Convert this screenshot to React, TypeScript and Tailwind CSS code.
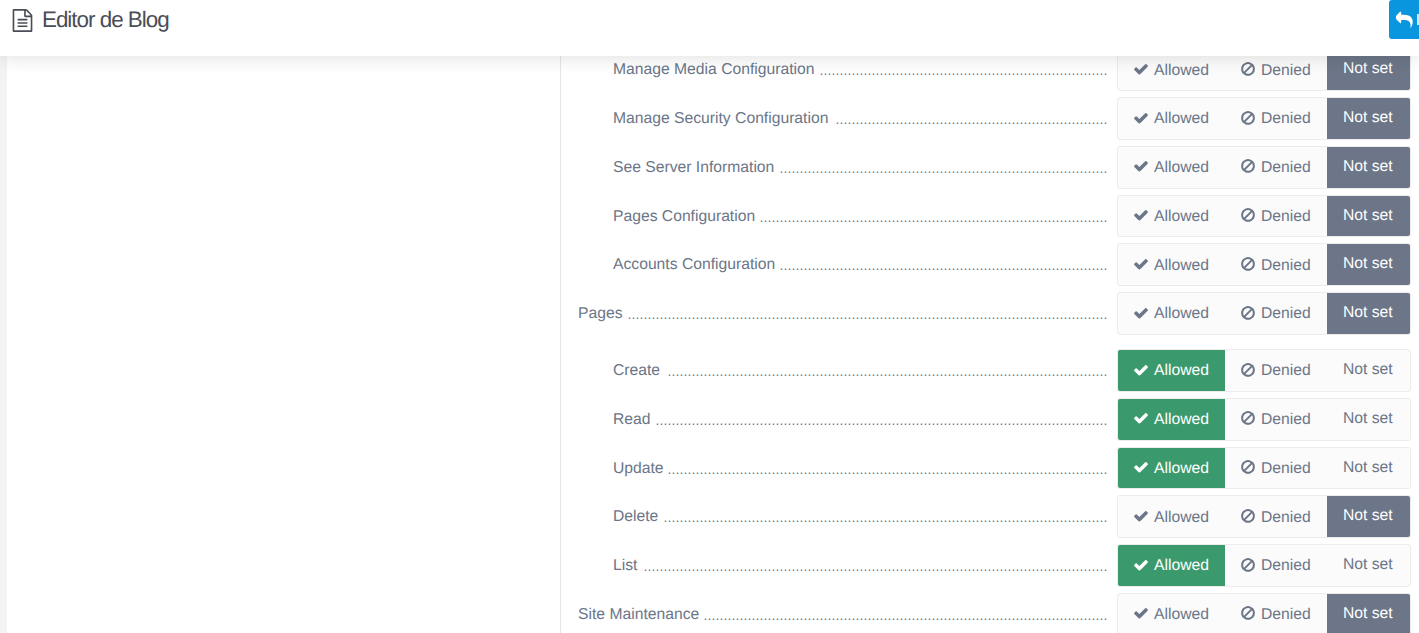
type Row = { label: string; sub: boolean; state: "allowed" | "notset"; dots: number; after?: boolean };

const rows: Row[] = [
  { label: "Manage Media Configuration", sub: true, state: "notset", dots: 72 },
  { label: "Manage Security Configuration", sub: true, state: "notset", dots: 68 },
  { label: "See Server Information", sub: true, state: "notset", dots: 82 },
  { label: "Pages Configuration", sub: true, state: "notset", dots: 87 },
  { label: "Accounts Configuration", sub: true, state: "notset", dots: 82 },
  { label: "Pages", sub: false, state: "notset", dots: 120, after: true },
  { label: "Create", sub: true, state: "allowed", dots: 110 },
  { label: "Read", sub: true, state: "allowed", dots: 113 },
  { label: "Update", sub: true, state: "allowed", dots: 110 },
  { label: "Delete", sub: true, state: "notset", dots: 111 },
  { label: "List", sub: true, state: "allowed", dots: 116 },
  { label: "Site Maintenance", sub: false, state: "notset", dots: 101 },
];

function Check() {
  return (
    <svg viewBox="0 0 1792 1792" className="w-[16px] h-[16px] mr-[5px] -mt-[3px] shrink-0" fill="currentColor">
      <path d="M1671 566q0 40-28 68l-724 724-136 136q-28 28-68 28t-68-28l-136-136-362-362q-28-28-28-68t28-68l136-136q28-28 68-28t68 28l294 295 656-657q28-28 68-28t68 28l136 136q28 28 28 68z" />
    </svg>
  );
}

function Ban() {
  return (
    <svg viewBox="0 0 1792 1792" className="w-[16px] h-[16px] mr-[5px] -mt-[3px] shrink-0" fill="currentColor">
      <path d="M1440 893q0-161-87-295l-754 753q137 89 297 89 111 0 211.5-43.5t173.5-116.5 116-174.5 43-212.5zm-999 299l755-754q-135-91-300-91-148 0-273 73t-198 199-73 274q0 162 89 299zm1223-299q0 157-61 300t-163.5 246-245 164-298.5 61-298.5-61-245-164-163.5-246-61-300 61-299.5 163.5-245.5 245-164 298.5-61 298.5 61 245 164 163.5 245.5 61 299.5z" />
    </svg>
  );
}

function PermissionRow({ label, sub, state, dots, after }: Row) {
  const allowed = state === "allowed";
  return (
    <div className={`flex items-center h-[42.75px] ${after ? "mb-[14.3px]" : "mb-[6px]"}`}>
      <div className={`flex flex-1 min-w-0 items-center pr-[9.5px] pt-[1.5px] ${sub ? "pl-[52px]" : "pl-[17px]"}`}>
        <span className="whitespace-nowrap text-[15.7px] leading-[20px] text-[#6b7688]">{label}</span>
        <span className="flex-1 min-w-0 whitespace-nowrap text-right text-[14px] leading-[20px] tracking-[0.11px] text-[#6b7688]">
          {".".repeat(dots)}
        </span>
      </div>
      <div className="flex w-[294px] h-full shrink-0 rounded-[3px] border border-[#ececec] bg-[#fbfbfb] text-[15.7px] text-[#6b7688] overflow-hidden">
        <div className={`flex items-center w-[107px] pl-[15px] pt-[1.5px] ${allowed ? "bg-[#3b9a6d] text-white" : ""}`}>
          <Check />
          <span>Allowed</span>
        </div>
        <div className="flex items-center w-[102px] pl-[15px] pt-[1.5px]">
          <Ban />
          <span>Denied</span>
        </div>
        <div className={`flex flex-1 items-center pb-[1px] pl-[16px] ${allowed ? "" : "bg-[#6c7688] text-white"}`}>
          <span>Not set</span>
        </div>
      </div>
    </div>
  );
}

export default function App() {
  return (
    <div className="relative h-screen overflow-hidden bg-white font-['Liberation_Sans',Arial,sans-serif] [text-rendering:geometricPrecision]">
      <header className="absolute inset-x-0 top-0 z-10 flex h-[56px] items-start justify-between bg-white shadow-[0_2px_18px_rgba(0,0,0,0.12)]">
        <div className="flex items-center pl-[10.7px] pt-[7px]">
          <svg viewBox="0 0 1792 1792" className="h-[23px] w-[23px] text-[#4a4d55]" fill="currentColor">
            <path d="M1596 380q28 28 48 76t20 88v1152q0 40-28 68t-68 28h-1344q-40 0-68-28t-28-68v-1600q0-40 28-68t68-28h896q40 0 88 20t76 48zm-444-244v376h376q-10-29-22-41l-313-313q-12-12-41-22zm384 1528v-1024h-416q-40 0-68-28t-28-68v-416h-768v1536h1280zm-1024-864q0-14 9-23t23-9h704q14 0 23 9t9 23v64q0 14-9 23t-23 9h-704q-14 0-23-9t-9-23v-64zm736 224q14 0 23 9t9 23v64q0 14-9 23t-23 9h-704q-14 0-23-9t-9-23v-64q0-14 9-23t23-9h704zm0 256q14 0 23 9t9 23v64q0 14-9 23t-23 9h-704q-14 0-23-9t-9-23v-64q0-14 9-23t23-9h704z" />
          </svg>
          <span className="ml-[8.3px] text-[22.4px] leading-[26px] tracking-[-1px] text-[#4a4d55]">Editor de Blog</span>
        </div>
        <div className="flex h-[39px] w-[30px] items-center rounded-l-[3px] bg-[#0a95df] pl-[7px] text-white">
          <svg viewBox="0 0 1792 1792" className="h-[18px] w-[18px] shrink-0" fill="currentColor">
            <path d="M1664 1120q0 166-127 451-3 7-10.5 24t-13.5 30-13 22q-12 17-28 17-15 0-23.5-10t-8.5-25q0-9 2.5-26.5t2.5-23.5q5-68 5-123 0-101-17.5-181t-48.5-138.5-80-101-105.5-69.5-133-42.5-154-21.5-175.5-6h-224v256q0 26-19 45t-45 19-45-19l-512-512q-19-19-19-45t19-45l512-512q19-19 45-19t45 19 19 45v256h224q713 0 875 403 53 134 53 333z" />
          </svg>
          <span className="ml-[3px] h-[11px] w-[2px] shrink-0 bg-white/80" />
        </div>
      </header>
      <div className="flex h-full pl-[7px] bg-[#f2f3f5]">
        <aside className="w-[553px] shrink-0 bg-white" />
        <main className="flex-1 min-w-0 border-l border-[#e6e6e6] bg-white pr-[8px] pt-[48.3px]">
          {rows.map((r) => (
            <PermissionRow key={r.label} {...r} />
          ))}
        </main>
      </div>
    </div>
  );
}
